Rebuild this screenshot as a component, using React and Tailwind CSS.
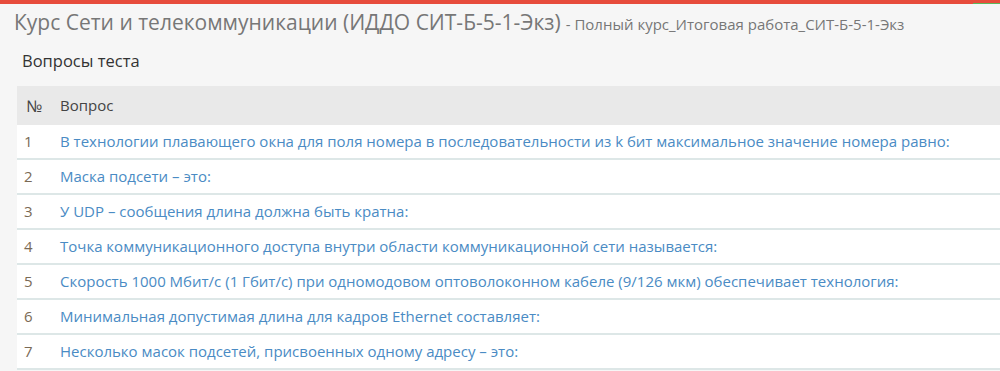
const questions = [
  "В технологии плавающего окна для поля номера в последовательности из k бит максимальное значение номера равно:",
  "Маска подсети – это:",
  "У UDP – сообщения длина должна быть кратна:",
  "Точка коммуникационного доступа внутри области коммуникационной сети называется:",
  "Скорость 1000 Мбит/с (1 Гбит/с) при одномодовом оптоволоконном кабеле (9/126 мкм) обеспечивает технология:",
  "Минимальная допустимая длина для кадров Ethernet составляет:",
  "Несколько масок подсетей, присвоенных одному адресу – это:",
];

export default function App() {
  return (
    <div className="w-[1000px] h-[371px] overflow-hidden bg-[#f6f6f6] font-['Open_Sans',sans-serif]">
      <div className="flex h-[4px]">
        <div className="flex-1 bg-[#e74c3c]" />
        <div className="w-[27px] flex flex-col">
          <div className="h-[3px] bg-[#e74c3c]" />
          <div className="h-[1px] bg-[#5cb85c]" />
        </div>
      </div>
      <div className="pl-[14px] pt-[4px] flex items-baseline text-[#777] whitespace-nowrap">
        <span className="text-[21px] leading-[28px]">Курс Сети и телекоммуникации (ИДДО СИТ-Б-5-1-Экз)</span>
        <span className="text-[15px] ml-[5px]">- Полный курс_Итоговая работа_СИТ-Б-5-1-Экз</span>
      </div>
      <div className="pl-[22px] pt-[14px] text-[16.5px] leading-[22px] text-[#333]">Вопросы теста</div>
      <div className="ml-[17px] mt-[14px]">
        <div className="flex h-[39px] items-center bg-[#e9e9e9] text-[15px] text-[#444]">
          <div className="w-[43px] pl-[9px] text-[16px]">№</div>
          <div>Вопрос</div>
        </div>
        {questions.map((q, i) => (
          <div key={i} className="flex h-[35px] items-center bg-white border-b-2 border-[#dde7e7] text-[15px] whitespace-nowrap">
            <div className="w-[43px] pl-[7px] text-[#7a6a55]">{i + 1}</div>
            <div className="text-[#4a8bc4]">{q}</div>
          </div>
        ))}
      </div>
    </div>
  );
}
